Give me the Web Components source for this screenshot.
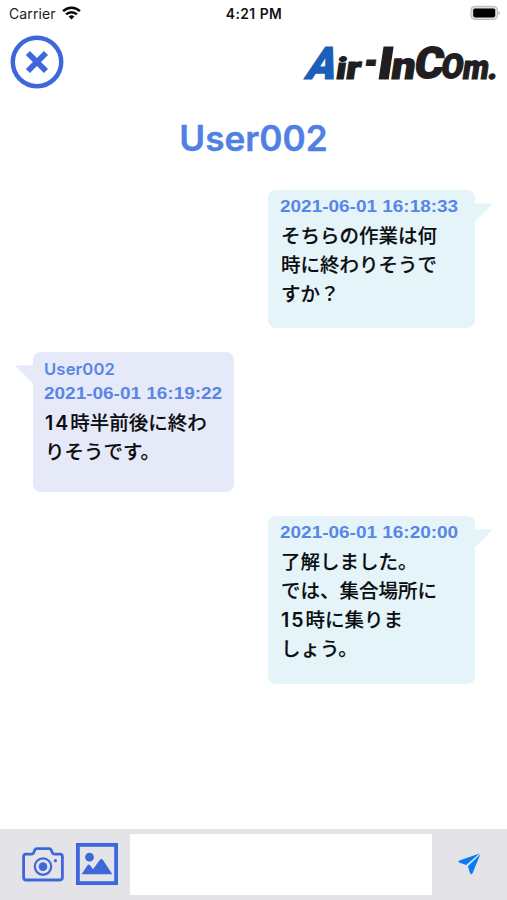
<!DOCTYPE html>
<html lang="ja">
<head>
<meta charset="utf-8">
<title>Air-InCom</title>
<style>
html,body{margin:0;height:100%;background:#fff;overflow:hidden}
</style>
</head>
<body>
<chat-app></chat-app>
<script>
const define=(name,html,init)=>customElements.define(name,class extends HTMLElement{
  constructor(){super();this.attachShadow({mode:'open'}).innerHTML=html;}
  connectedCallback(){if(init)init(this);}
});

define('status-bar',`<style>
:host{display:grid;grid-template-columns:1fr auto 1fr;align-items:center;height:28px;padding:0 8px 0 9px;box-sizing:border-box;font:14px/28px Inter,sans-serif;color:#1c1c1c}
.l{display:flex;align-items:center;gap:6px}
.carrier{letter-spacing:.12px}
.time{font-weight:600;font-size:13.8px;letter-spacing:.5px;color:#111}
.battery{justify-self:end}
svg{display:block}
</style>
<div class="l"><span class="carrier">Carrier</span>
<svg width="19" height="14" viewBox="0 0 19 14" fill="none" stroke="#050505" stroke-width="2.5" style="margin-top:-2px"><path d="M1.1 5.1C5.8.5 13.2.5 17.9 5.1"/><path d="M4.1 8.3C7.2 5.4 11.8 5.4 14.9 8.3"/><path d="M6.6 10.4Q9.5 8.2 12.4 10.4L9.5 13.6Z" fill="#050505" stroke="none"/></svg></div>
<span class="time">4:21 PM</span>
<svg class="battery" width="30" height="16" viewBox="0 0 30 16" style="margin:-2px -1px 0 0"><rect x=".9" y="1.3" width="26.6" height="13.2" rx="4" fill="#ddd" stroke="#b8b8b8"/><rect x="3.2" y="3.5" width="22" height="8.9" rx="1.8"/><path d="M28.6 5.5Q31 7.9 28.6 10.3Z" fill="#aaa"/></svg>`);

define('close-button',`<style>:host{display:block;width:54px;height:54px}svg{display:block}</style>
<svg width="54" height="54" viewBox="0 0 54 54" fill="none" stroke="#3f67dc"><circle cx="27" cy="27" r="24.2" stroke-width="4.5"/><path d="M17.9 18 36 36M36 18 17.9 36" stroke-width="5.8"/></svg>`);

define('brand-logo',`<style>:host{display:block}svg{display:block;overflow:visible}text{font-family:Roboto,sans-serif;font-weight:900;stroke-width:1.2}</style>
<svg width="204" height="64" viewBox="-4 -14 204 64" fill="#211e21" stroke="#211e21">
<g transform="translate(0 35.5) skewX(-18)"><text font-size="45" x="0" textLength="29" lengthAdjust="spacingAndGlyphs" fill="#1b5fb8" stroke="#1b5fb8">A</text></g>
<g transform="translate(0 35.5) skewX(-8.5)">
<text font-size="30" x="31" textLength="10" lengthAdjust="spacingAndGlyphs" stroke-width=".8">i</text>
<text font-size="32" x="41" textLength="14.5" lengthAdjust="spacingAndGlyphs" stroke-width=".8">r</text>
<text font-size="40" x="58" y="-3.5" textLength="13.5" lengthAdjust="spacingAndGlyphs" stroke-width=".5">-</text>
<text font-size="45" x="72" textLength="15.5" lengthAdjust="spacingAndGlyphs">I</text>
<text font-size="38" x="86" textLength="24" lengthAdjust="spacingAndGlyphs">n</text>
<text font-size="43.5" x="109" y="-.5" textLength="29" lengthAdjust="spacingAndGlyphs" stroke-width="1.8">C</text>
<text font-size="34" x="136" y="-.5" textLength="22" lengthAdjust="spacingAndGlyphs">O</text>
<text font-size="34" x="157.5" textLength="26" lengthAdjust="spacingAndGlyphs" stroke-width=".8">m</text>
<text font-size="32" x="183" textLength="9.5" lengthAdjust="spacingAndGlyphs" stroke-width=".8">.</text>
</g></svg>`);

define('app-header',`<style>:host{display:flex;justify-content:space-between;padding:7px 3px 0 10px;height:72px;box-sizing:border-box}brand-logo{margin-top:-6px}</style>
<close-button></close-button><brand-logo></brand-logo>`);

define('chat-title',`<style>:host{display:block;text-align:center;height:90px;box-sizing:border-box;padding-top:16px;font:600 35.2px/44px Inter,sans-serif;color:#5080e4;-webkit-text-stroke:.4px #5080e4}</style><slot></slot>`);

define('wide-num',`<style>:host{font:600 19.5px/20px Inter,sans-serif;letter-spacing:2px;-webkit-text-stroke:0}</style><slot></slot>`);

define('chat-message',`<style>
:host{display:block;position:relative;box-sizing:border-box;width:207px;border-radius:8px;background:#e5f4f9;padding:5px 0 0 12px;align-self:flex-end;color:#0a0d10;font:500 19.5px/29.2px "Noto Sans CJK JP",sans-serif}
:host([incoming]){width:201px;background:#e6eaf8;align-self:flex-start;padding-left:11px}
.meta{font:600 16.6px/24px Inter,sans-serif;color:#5886e6;white-space:nowrap;height:24px}
.meta:empty{display:none}
.who{letter-spacing:.15px}
.meta.date{margin-top:-1px;width:max-content;font:bold 17.2px/24px "Liberation Sans",sans-serif;transform:scaleX(1.103);transform-origin:0 0}
.who:not(:empty)+.meta.date{margin-top:0}
.body{white-space:pre;margin-top:1.5px;padding-left:1px;-webkit-text-stroke:.15px #0a0d10}
.tail{position:absolute;top:13px;right:-19px;display:block}
:host([incoming]) .tail{right:auto;left:-19px;transform:scaleX(-1)}
</style>
<div class="meta who"></div><div class="meta date"></div><div class="body"><slot></slot></div>
<svg class="tail" width="20" height="20" viewBox="0 0 20 20"><path d="M0 0.5H19L1 18.5Z"/></svg>`,el=>{
  const r=el.shadowRoot;
  r.querySelector('.who').textContent=el.getAttribute('user')||'';
  r.querySelector('.date').textContent=el.getAttribute('date');
  r.querySelector('path').setAttribute('fill',el.hasAttribute('incoming')?'#e6eaf8':'#e5f4f9');
});

define('message-list',`<style>:host{display:flex;flex-direction:column;flex:1;gap:24px;padding:0 32px 0 33px}</style><slot></slot>`);

define('camera-icon',`<style>:host,svg{display:block}</style>
<svg width="42" height="35" viewBox="0 0 42 35" fill="none" stroke="#3f67dc" stroke-width="2.8" stroke-linejoin="round"><path d="M4 7.2H9.5Q11 7.2 11.6 5.7L12.8 3Q13.4 1.7 14.8 1.7H27.2Q28.6 1.7 29.2 3L30.4 5.7Q31 7.2 32.5 7.2H38Q40.4 7.2 40.4 9.6V30.6Q40.4 33 38 33H4Q1.6 33 1.6 30.6V9.6Q1.6 7.2 4 7.2Z"/><circle cx="21" cy="19.6" r="8.2" stroke-width="2.2"/><circle cx="21" cy="19.6" r="4.3" fill="#3f67dc" stroke="none"/><circle cx="33.4" cy="13.7" r="1.6" fill="#3f67dc" stroke="none"/></svg>`);

define('picture-icon',`<style>:host,svg{display:block}</style>
<svg width="42" height="42" viewBox="0 0 42 42"><rect x="1.9" y="1.9" width="38.2" height="38.2" fill="none" stroke="#3f67dc" stroke-width="3.8"/><g fill="#3f67dc"><circle cx="13.5" cy="14.2" r="4.4"/><path d="M5.5 31.3 11.5 22.3Q12.7 20.6 14 22.3L17 26.2 23.7 17Q25.3 14.8 27 17L36.3 31.3Z"/></g></svg>`);

define('send-icon',`<style>:host,svg{display:block}</style>
<svg width="23" height="22" viewBox="0 0 23 22" fill="#087cf7"><path d="M21.5.4 1.4 7.5Q-.4 8.4 1.2 9.5L8.2 11.9Z"/><path d="M22.3 1.2 14.7 20Q13.4 22.2 12.1 20.2L9.9 13.2Z"/></svg>`);

define('message-composer',`<style>
:host{display:flex;align-items:flex-start;height:71px;box-sizing:border-box;background:#e4e4e8;padding-left:22px}
camera-icon{margin-top:18px}picture-icon{margin:14px 0 0 12px}
.field{width:302px;height:61px;margin:5px 0 0 12px;background:#fff}
send-icon{margin:24px 0 0 26px}
</style><camera-icon></camera-icon><picture-icon></picture-icon><div class="field" role="textbox"></div><send-icon></send-icon>`);

define('chat-app',`<style>:host{display:flex;flex-direction:column;width:507px;height:900px;background:#fff}</style>
<status-bar></status-bar><app-header></app-header><chat-title>User002</chat-title>
<message-list>
<chat-message date="2021-06-01 16:18:33" style="height:138px">そちらの作業は何
時に終わりそうで
すか？</chat-message>
<chat-message incoming user="User002" date="2021-06-01 16:19:22" style="height:140px"><wide-num>14</wide-num>時半前後に終わ
りそうです。</chat-message>
<chat-message date="2021-06-01 16:20:00" style="height:168px">了解しました。
では、集合場所に
<wide-num>15</wide-num>時に集りま
しょう。</chat-message>
</message-list>
<message-composer></message-composer>`);
</script>
</body>
</html>
